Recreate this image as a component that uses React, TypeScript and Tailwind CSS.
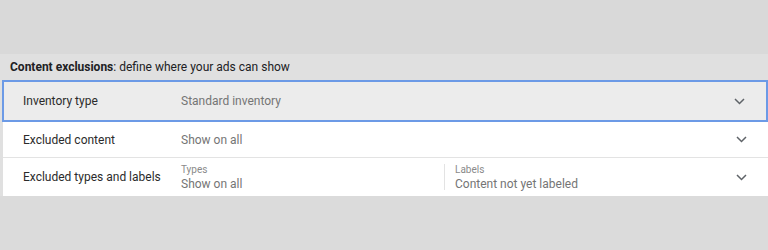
function Chevron() {
    return (
        <div className="w-[60px] flex justify-center pl-[6px]">
            <svg width="11" height="7" viewBox="0 0 11 7" fill="none">
                <polyline points="1,1 5.5,5.5 10,1" stroke="#5f6368" strokeWidth="1.5" />
            </svg>
        </div>
    );
}

export default function App() {
    return (
        <div className="w-[768px] h-[250px] bg-[#dbdbdb] font-['Roboto',sans-serif] text-[#2b2b2b]">
            <div className="h-[54px] bg-[#d9d9d9]" />

            <div className="bg-[#e0e0e0] pl-[2px]">
                {/* Header */}
                <div className="h-[26px] pl-[8px] flex items-center text-[12px] text-[#202124]">
                    <span className="font-bold">Content exclusions</span>
                    <span>: define where your ads can show</span>
                </div>

                {/* Selected row */}
                <div className="h-[42px] flex items-center bg-[#ececec] border-2 border-[#6c9ae6] text-[12px]">
                    <div className="w-[177px] pl-[19px]">Inventory type</div>
                    <div className="flex-1 text-[#757575]">Standard inventory</div>
                    <Chevron />
                </div>

                <div className="pl-[1px]">
                    <div className="h-[36px] flex items-center bg-white border-b border-[#e3e3e3] text-[12px]">
                        <div className="w-[178px] pl-[20px]">Excluded content</div>
                        <div className="flex-1 text-[#757575]">Show on all</div>
                        <Chevron />
                    </div>

                    <div className="h-[38px] flex items-center bg-white text-[12px]">
                        <div className="w-[178px] pl-[20px]">Excluded types and labels</div>
                        <div className="w-[263px] flex flex-col leading-none text-[#757575]">
                            <span className="text-[10px] text-[#8a8a8a]">Types</span>
                            <span className="mt-[3px]">Show on all</span>
                        </div>
                        <div className="w-px h-[26px] bg-[#e3e3e3]" />
                        <div className="flex-1 pl-[10px] flex flex-col leading-none text-[#757575]">
                            <span className="text-[10px] text-[#8a8a8a]">Labels</span>
                            <span className="mt-[3px]">Content not yet labeled</span>
                        </div>
                        <Chevron />
                    </div>
                </div>
            </div>
        </div>
    );
}
